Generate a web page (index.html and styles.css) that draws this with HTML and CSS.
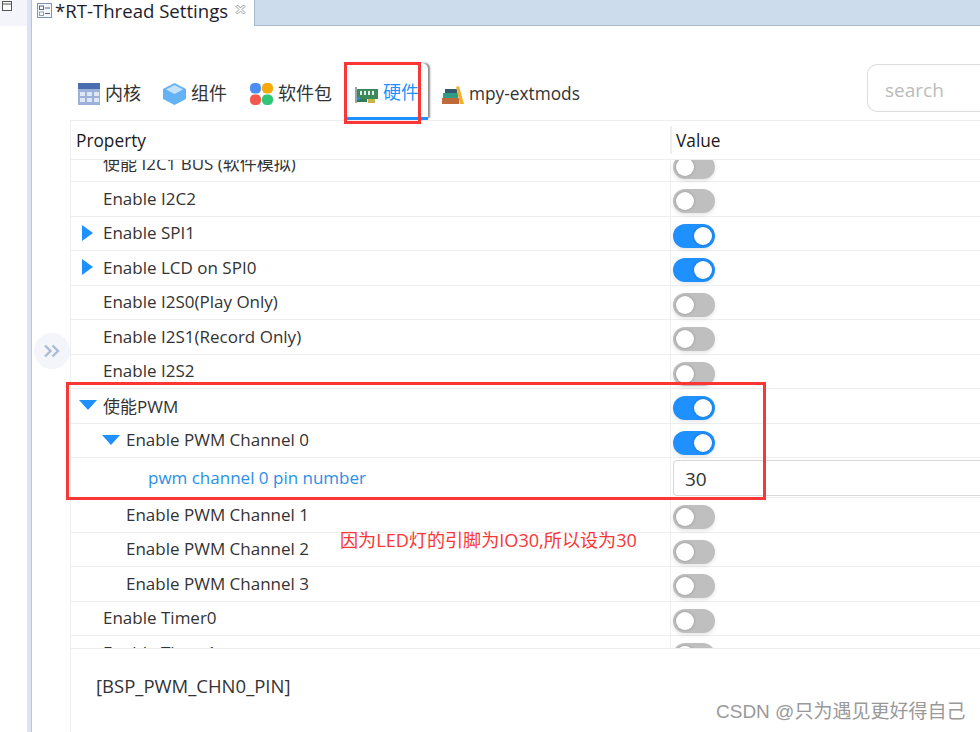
FILE: index.html
```html
<!DOCTYPE html>
<html lang="zh">
<head>
<meta charset="utf-8">
<title>RT-Thread Settings</title>
<link rel="stylesheet" href="styles.css">
</head>
<body>
<div class="app">
  <aside class="side">
    <div class="side-top">
      <svg class="win-icon" width="11" height="11" viewBox="0 0 11 11"><rect x=".5" y=".5" width="9" height="9" fill="#fff" stroke="#555"/><path d="M0 3h10" stroke="#555"/></svg>
    </div>
  </aside>
  <div class="sash"></div>
  <main class="main">
    <div class="tabstrip">
      <div class="doc-tab">
        <svg width="16" height="16" viewBox="0 0 16 16"><rect x=".5" y=".5" width="14" height="14" fill="#f4f7fb" stroke="#7f93b2"/><rect x="2.5" y="3" width="4" height="3.5" fill="#fff" stroke="#55657d"/><path d="M8 5h5M8 10.500h5" stroke="#55657d"/><rect x="2.500" y="9" width="4" height="3.500" fill="#fff" stroke="#8fa0b8"/></svg>
        <span class="doc-title">*RT-Thread Settings</span>
        <svg class="doc-close" width="11" height="11" viewBox="0 0 11 11"><path d="M1 2.500 2.500 1 5.500 4 8.500 1 10 2.500 7 5.500 10 8.500 8.500 10 5.500 7 2.500 10 1 8.500 4 5.500z" fill="#fff" stroke="#9a9a9a"/></svg>
      </div>
      <div class="strip-fill"></div>
    </div>
    <div class="editor">
      <div class="toolbar">
        <nav class="tabs">
          <div class="tab tab-a">
            <svg width="22" height="22" viewBox="0 0 22 22"><rect width="22" height="22" fill="#9cb1d9"/><rect width="22" height="6" fill="#4a6db0"/><path d="M2 9h5v4H2zM9 9h5v4H9zM16 9h5v4h-5zM2 15h5v4H2zM9 15h5v4H9zM16 15h5v4h-5z" fill="#dfe7f5"/></svg>
            <span>内核</span>
          </div>
          <div class="tab tab-b">
            <svg width="23" height="22" viewBox="0 0 23 22"><path d="M11.500 0 23 6v10l-11.500 6L0 16V6z" fill="#62b2f4"/><path d="M11.500 2 20 6.500 11.500 11 3 6.500z" fill="#c4e3fb"/></svg>
            <span>组件</span>
          </div>
          <div class="tab tab-c">
            <svg width="23" height="22" viewBox="0 0 23 22"><rect width="11" height="10.500" rx="4.500" fill="#4a8ef5"/><rect x="12" width="11" height="10.500" rx="4.500" fill="#f7a90c"/><rect y="11.500" width="11" height="10.500" rx="4.500" fill="#f4574b"/><rect x="12" y="11.500" width="11" height="10.500" rx="4.500" fill="#2fc777"/></svg>
            <span>软件包</span>
          </div>
          <div class="tab tab-d active">
            <svg width="23" height="18" viewBox="0 0 23 18"><path d="M0 1h2v16H0z" fill="#9aa5a5"/><rect x="2" y="3" width="21" height="10" fill="#3c8a5a"/><path d="M2 13h10v3H2z" fill="#2f7d57"/><path d="M13 13h7v4h-7z" fill="#c9b24a"/><path d="M5 5h2v4H5zM9 5h2v4H9zM13 5h2v4h-2zM17 5h2v4h-2z" fill="#e7eef0"/><path d="M2 11h3v3H2z" fill="#2e8ae6"/></svg>
            <span>硬件</span>
          </div>
          <div class="tab tab-e">
            <svg width="22" height="18" viewBox="0 0 22 18"><rect y="12" width="17" height="6" fill="#c0693a"/><rect x="1" y="7" width="15" height="5" fill="#2f9d86"/><rect x="3" y="3" width="12" height="4" fill="#34566f"/><path d="M14 1l3-1 5 18h-4z" fill="#efb032"/></svg>
            <span>mpy-extmods</span>
          </div>
        </nav>
        <div class="search">search</div>
      </div>
      <section class="tree">
        <div class="tree-head">
          <div class="col-prop">Property</div>
          <div class="col-val">Value</div>
        </div>
        <div class="tree-view">
          <div class="tree-rows">
            <div class="row"><div class="cell-prop l1 first"><span class="tw"></span>使能 I2C1 BUS (软件模拟)</div><div class="cell-val"><span class="sw"></span></div></div>
            <div class="row"><div class="cell-prop l1"><span class="tw"></span>Enable I2C2</div><div class="cell-val"><span class="sw"></span></div></div>
            <div class="row"><div class="cell-prop l1"><span class="tw"><i class="tri-r"></i></span>Enable SPI1</div><div class="cell-val"><span class="sw on"></span></div></div>
            <div class="row"><div class="cell-prop l1"><span class="tw"><i class="tri-r"></i></span>Enable LCD on SPI0</div><div class="cell-val"><span class="sw on"></span></div></div>
            <div class="row"><div class="cell-prop l1"><span class="tw"></span>Enable I2S0(Play Only)</div><div class="cell-val"><span class="sw"></span></div></div>
            <div class="row"><div class="cell-prop l1"><span class="tw"></span>Enable I2S1(Record Only)</div><div class="cell-val"><span class="sw"></span></div></div>
            <div class="row"><div class="cell-prop l1"><span class="tw"></span>Enable I2S2</div><div class="cell-val"><span class="sw"></span></div></div>
            <div class="row"><div class="cell-prop l1"><span class="tw"><i class="tri-d"></i></span>使能PWM</div><div class="cell-val"><span class="sw on"></span></div></div>
            <div class="row"><div class="cell-prop l2"><span class="tw"><i class="tri-d"></i></span>Enable PWM Channel 0</div><div class="cell-val"><span class="sw on"></span></div></div>
            <div class="row row-tall"><div class="cell-prop l3 sel">pwm channel 0 pin number</div><div class="cell-val val-input"><div class="num-input">30</div></div></div>
            <div class="row"><div class="cell-prop l2"><span class="tw"></span>Enable PWM Channel 1</div><div class="cell-val"><span class="sw"></span></div></div>
            <div class="row"><div class="cell-prop l2"><span class="tw"></span>Enable PWM Channel 2</div><div class="cell-val"><span class="sw"></span></div></div>
            <div class="row"><div class="cell-prop l2"><span class="tw"></span>Enable PWM Channel 3</div><div class="cell-val"><span class="sw"></span></div></div>
            <div class="row"><div class="cell-prop l1"><span class="tw"></span>Enable Timer0</div><div class="cell-val"><span class="sw"></span></div></div>
            <div class="row"><div class="cell-prop l1"><span class="tw"></span>Enable Timer1</div><div class="cell-val"><span class="sw"></span></div></div>
          </div>
        </div>
        <div class="detail">[BSP_PWM_CHN0_PIN]</div>
      </section>
    </div>
  </main>
</div>
<div class="expand">
  <svg width="18" height="14" viewBox="0 0 18 14"><path d="M2 1.500 7.500 7 2 12.500M9.500 1.500 15 7l-5.500 5.500" fill="none" stroke="#a9bdd6" stroke-width="2.400"/></svg>
</div>
<div class="mark mark-tab"></div>
<div class="mark mark-pwm"></div>
<div class="note">因为LED灯的引脚为IO30,所以设为30</div>
<div class="watermark">CSDN @只为遇见更好得自己</div>
</body>
</html>
```
FILE: styles.css
```css
* { box-sizing: border-box; }
html, body { margin: 0; height: 100%; overflow: hidden; background: #fff; }
body {
  width: 980px;
  height: 732px;
  position: relative;
  font-family: "Open Sans", "Noto Sans CJK SC", sans-serif;
  font-size: 17px;
  color: #333;
}
.app { display: flex; height: 732px; }
.side { width: 27px; flex: none; }
.side-top { height: 26px; background: #f3f5fb; padding: 1px 0 0 2px; }
.win-icon { display: block; }
.sash { width: 5px; flex: none; background: #dbe3f4; border-right: 1px solid #b9c5da; }
.main { flex: 1; min-width: 0; display: flex; flex-direction: column; }
.tabstrip { height: 26px; flex: none; display: flex; }
.doc-tab { width: 223px; flex: none; display: flex; align-items: center; padding: 0 0 4px 5px; background: #fff; border-right: 1px solid #a9b9d0; }
.doc-title { margin-left: 2px; font-size: 18.6px; line-height: 22px; color: #1c1c2c; white-space: nowrap; }
.doc-close { margin-left: 7px; margin-top: -3px; }
.strip-fill { flex: 1; background: #cddcec; border-bottom: 1px solid #a9b9d0; }
.editor { flex: 1; min-height: 0; padding-left: 38px; display: flex; flex-direction: column; }
.toolbar { height: 94px; flex: none; display: flex; align-items: flex-end; position: relative; }
.tabs { display: flex; height: 57px; }
.tab { display: flex; align-items: center; gap: 5px; height: 57px; padding: 5px 0 0 8px; font-size: 18px; line-height: 24px; color: #333; white-space: nowrap; }
.tab-a span, .tab-b span, .tab-c span { margin-bottom: 2px; }
.tab-b { padding-left: 22px; }
.tab-c { padding-left: 23px; }
.tab-d { margin-left: 15px; padding: 6px 9px 0 8px; margin-right: 2px; }
.tab-d span { margin-bottom: 2px; }
.tab-d svg { margin-top: 4px; }
.tab-e { padding-left: 12px; font-size: 17.3px; }
.tab-e svg { margin-top: 2px; }
.active { color: #1e90ff; border-bottom: 3px solid #1e90ff; border-radius: 0 6px 0 0; box-shadow: 3px -1px 2px -1px #8c8c8c; }
.search {
  position: absolute;
  left: 797px;
  right: 0;
  top: 38px;
  height: 48px;
  border: 1px solid #ddd;
  border-right: 0;
  border-radius: 10px 0 0 10px;
  padding-left: 17px;
  font-size: 19px;
  line-height: 50px;
  color: #bbb;
}
.tree { flex: 1; min-height: 0; display: flex; flex-direction: column; border-left: 1px solid #eee; border-top: 1px solid #eee; }
.tree-head { height: 39px; flex: none; display: flex; align-items: stretch; border-bottom: 1px solid #eee; font-size: 17.3px; color: #1a1a1a; font-weight: 500; }
.col-prop { width: 599px; flex: none; padding: 8px 0 0 5px; line-height: 24px; }
.col-val { flex: 1; padding: 3px 0 0 4px; line-height: 24px; border-left: 2px solid #eee; margin: 5px 0 0; height: 28px; }
.tree-view { height: 488px; flex: none; overflow: hidden; }
.tree-rows { margin-top: -12.5px; }
.row { height: 34.5px; display: flex; border-bottom: 1px solid #eee; }
.row-tall { height: 40px; }
.cell-prop { width: 599px; flex: none; display: flex; align-items: center; padding-bottom: 1px; font-size: 17px; color: #333; white-space: nowrap; }
.first { padding-bottom: 3px; }
.l1 { padding-left: 7px; }
.l2 { padding-left: 30px; }
.l3 { padding-left: 77px; }
.sel { color: #2a8fe8; }
.tw { width: 25px; height: 16px; flex: none; display: flex; align-items: center; justify-content: flex-start; }
.tri-r { display: block; margin-left: 4px; width: 0; height: 0; border-left: 11px solid #1e90ff; border-top: 8px solid transparent; border-bottom: 8px solid transparent; }
.tri-d { display: block; margin-left: 1px; width: 0; height: 0; border-top: 10px solid #1e90ff; border-left: 9px solid transparent; border-right: 9px solid transparent; }
.cell-val { flex: 1; border-left: 1px solid #eee; padding: 7px 0 0 2px; }
.val-input { padding: 2px 0 0 2px; }
.sw { display: block; position: relative; width: 42px; height: 24px; border-radius: 12px; background: #bfbfbf; box-shadow: 0 2px 4px rgba(0,0,0,.1); }
.sw::after { content: ""; position: absolute; left: 3px; top: 3px; width: 18px; height: 18px; border-radius: 50%; background: #fff; box-shadow: 0 0 3px rgba(0,0,0,.25); }
.sw.on { background: #1e90ff; }
.sw.on::after { left: 21px; }
.num-input { height: 36px; border: 1px solid #d9d9d9; border-right: 0; border-radius: 4px 0 0 4px; padding-left: 11px; font-size: 19px; line-height: 36px; color: #333; }
.detail { flex: 1; border-top: 1px solid #eee; padding: 25px 0 0 25px; font-size: 18.5px; line-height: 24px; color: #333; }
.expand { position: absolute; left: 34px; top: 333px; width: 36px; height: 36px; border-radius: 50%; background: #f3f5fa; display: flex; align-items: center; justify-content: center; }
.mark { position: absolute; border: 3px solid #fa3636; }
.mark-tab { left: 344px; top: 62px; width: 77px; height: 62px; }
.mark-pwm { left: 66px; top: 382px; width: 700px; height: 118px; }
.note { position: absolute; left: 340px; top: 528px; font-size: 18.1px; line-height: 24px; color: #fa3636; white-space: nowrap; }
.watermark { position: absolute; left: 716px; top: 700px; font-family: "Liberation Sans", "Noto Sans CJK SC", sans-serif; font-size: 19px; line-height: 24px; color: #999; white-space: nowrap; }
```
